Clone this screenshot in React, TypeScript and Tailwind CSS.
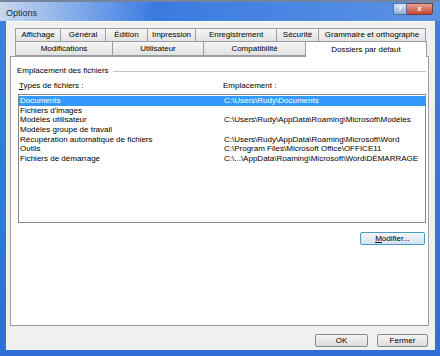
import React from 'react';

const row1 = [
  { label: 'Affichage', w: 'w-[45px]' },
  { label: 'Général', w: 'w-[45px]' },
  { label: 'Édition', w: 'w-[42px]' },
  { label: 'Impression', w: 'w-[48px]' },
  { label: 'Enregistrement', w: 'w-[81px]' },
  { label: 'Sécurité', w: 'w-[42px]' },
  { label: 'Grammaire et orthographe', w: 'w-[108px]' },
];

const row2 = [
  { label: 'Modifications', w: 'w-[97px]' },
  { label: 'Utilisateur', w: 'w-[91px]' },
  { label: 'Compatibilité', w: 'w-[102px]' },
];

const fileTypes = [
  { type: 'Documents', path: 'C:\\Users\\Rudy\\Documents' },
  { type: "Fichiers d'images", path: '' },
  { type: 'Modèles utilisateur', path: 'C:\\Users\\Rudy\\AppData\\Roaming\\Microsoft\\Modèles' },
  { type: 'Modèles groupe de travail', path: '' },
  { type: 'Récupération automatique de fichiers', path: 'C:\\Users\\Rudy\\AppData\\Roaming\\Microsoft\\Word' },
  { type: 'Outils', path: 'C:\\Program Files\\Microsoft Office\\OFFICE11' },
  { type: 'Fichiers de démarrage', path: 'C:\\...\\AppData\\Roaming\\Microsoft\\Word\\DÉMARRAGE' },
];

function Tab({ label, w, h }: { label: string; w: string; h: string }) {
  return (
    <div
      className={`${w} ${h} flex items-center justify-center border border-r-0 border-[#9a9da4] bg-gradient-to-b from-[#f6f6f6] to-[#e2e2e2] last:border-r`}
    >
      {label}
    </div>
  );
}

function Button({ children, w, focused }: { children: React.ReactNode; w: string; focused?: boolean }) {
  return (
    <div
      className={`${w} h-[13px] flex items-center justify-center rounded-[2px] border ${
        focused
          ? 'border-[#4a9bc4] bg-gradient-to-b from-[#f2f7fb] to-[#d6e2ec]'
          : 'border-[#8a8a8a] bg-gradient-to-b from-[#f4f4f4] to-[#dcdcdc]'
      }`}
    >
      {children}
    </div>
  );
}

export default function App() {
  return (
    <div className="w-[440px] h-[356px] flex flex-col overflow-hidden bg-gradient-to-b from-[#3e7fe0] to-[#2f6fd6] font-['Liberation_Sans',Arial,sans-serif] text-[8px] text-black">
      {/* title bar */}
      <div className="h-[21px] flex border-t-2 border-[#74849c] bg-gradient-to-r from-[#c7d7ed] via-[#3a7be1] via-35% to-[#5b92e3]">
        <span className="pl-[6px] pt-[6px] text-[9px] leading-[10px] text-[#1b2a40]">Options</span>
        <div className="ml-auto mr-[7px] mt-[1px] flex h-[12px]">
          <div className="w-[14px] flex items-center justify-center rounded-bl-[3px] border border-[#4f6f9c] bg-gradient-to-b from-[#d7e4f5] to-[#8fb0db] text-[8px] font-bold text-white">
            ?
          </div>
          <div className="w-[26px] flex items-center justify-center rounded-br-[3px] border border-l-0 border-[#7a3a36] bg-gradient-to-b from-[#e8a193] to-[#c4452f] text-[8px] font-bold text-white">
            x
          </div>
        </div>
      </div>

      <div className="flex-1 flex pl-[6px] pr-[5px] pb-[6px]">
        <div className="flex-1 flex flex-col bg-[#f0f0f0] border-t border-white">
          {/* tabs */}
          <div className="pt-[6px] pl-[9px] flex flex-col">
            <div className="flex">
              {row1.map((t) => (
                <Tab key={t.label} label={t.label} w={t.w} h="h-[14px]" />
              ))}
            </div>
            <div className="flex -mt-px relative z-10">
              {row2.map((t) => (
                <Tab key={t.label} label={t.label} w={t.w} h="h-[15px]" />
              ))}
              <div className="w-[122px] h-[16px] flex items-center justify-center border border-[#9a9da4] border-b-0 bg-white">
                Dossiers par défaut
              </div>
            </div>
          </div>

          {/* panel */}
          <div className="-mt-px ml-[4px] mr-[6px] h-[270px] flex flex-col border border-[#9a9da4] bg-white pl-[6px] pr-[2px] pt-[9px]">
            <fieldset className="border-0 border-t border-[#bfc4c8]">
              <legend className="pr-[4px] leading-[10px]">Emplacement des fichiers</legend>
            </fieldset>
            <div className="flex mt-[5px] h-[10px] items-center pl-[2px]">
              <span className="w-[204px]">
                <span className="underline">T</span>ypes de fichiers :
              </span>
              <span>Emplacement :</span>
            </div>
            <div className="mt-[3px] ml-px w-[408px] h-[129px] border border-[#828790] pt-px">
              {fileTypes.map((f, i) => (
                <div
                  key={f.type}
                  className={`flex h-[9.7px] leading-[9.7px] pl-px whitespace-nowrap ${
                    i === 0 ? 'bg-[#3399ff] text-white' : ''
                  }`}
                >
                  <span className="w-[204px]">{f.type}</span>
                  <span>{f.path}</span>
                </div>
              ))}
            </div>
            <div className="mt-[9px] flex justify-end pr-[1px]">
              <Button w="w-[65px]" focused>
                <span>
                  <span className="underline">M</span>odifier...
                </span>
              </Button>
            </div>
          </div>

          {/* dialog buttons */}
          <div className="mt-[8px] flex justify-end gap-[9px] pr-[7px]">
            <Button w="w-[53px]">OK</Button>
            <Button w="w-[51px]">Fermer</Button>
          </div>
        </div>
      </div>
    </div>
  );
}
